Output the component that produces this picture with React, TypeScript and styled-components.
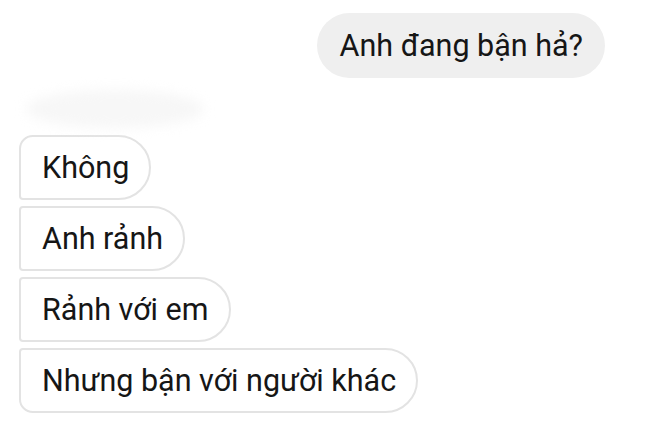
import React from "react";
import styled, { createGlobalStyle, css } from "styled-components";

const Global = createGlobalStyle`
  html, body { margin: 0; padding: 0; background: #ffffff; }
  body { font-family: Roboto, "Noto Sans", "Liberation Sans", sans-serif; }
`;

const Page = styled.div`
  width: 648px;
  height: 423px;
  overflow: hidden;
  box-sizing: border-box;
  padding-top: 13px;
  display: flex;
  flex-direction: column;
  background: #ffffff;
`;

const OutgoingRow = styled.div`
  display: flex;
  justify-content: flex-end;
  padding-right: 43px;
`;

const bubbleText = css`
  box-sizing: border-box;
  height: 65px;
  display: flex;
  align-items: center;
  font-size: 30.5px;
  line-height: 1;
  color: #161616;
  white-space: nowrap;
`;

const OutgoingBubble = styled.div`
  ${bubbleText};
  padding: 1px 22px 0 23px;
  background: #efefef;
  border-radius: 33px;
`;

const BlurredName = styled.div`
  margin: 12px 0 0 26px;
  width: 178px;
  height: 38px;
  border-radius: 50%;
  background: #f7f7f7;
  filter: blur(6px);
`;

const IncomingGroup = styled.div`
  margin-top: 7px;
  padding-left: 19px;
  display: flex;
  flex-direction: column;
  align-items: flex-start;
  gap: 6px;
`;

type Pos = "first" | "middle" | "last";

const radii: Record<Pos, string> = {
  first: "14px 33px 33px 4px",
  middle: "4px 33px 33px 4px",
  last: "4px 33px 33px 14px",
};

const IncomingBubble = styled.div<{ $pos: Pos }>`
  ${bubbleText};
  padding: 2px 20px 0 21px;
  background: #ffffff;
  border: 2px solid #e3e3e3;
  border-radius: ${(p) => radii[p.$pos]};
`;

const incoming = ["Không", "Anh rảnh", "Rảnh với em", "Nhưng bận với người khác"];

export default function App() {
  return (
    <>
      <Global />
      <Page>
        <OutgoingRow>
          <OutgoingBubble>Anh đang bận hả?</OutgoingBubble>
        </OutgoingRow>
        <BlurredName />
        <IncomingGroup>
          {incoming.map((t, i) => (
            <IncomingBubble
              key={t}
              $pos={i === 0 ? "first" : i === incoming.length - 1 ? "last" : "middle"}
            >
              {t}
            </IncomingBubble>
          ))}
        </IncomingGroup>
      </Page>
    </>
  );
}
